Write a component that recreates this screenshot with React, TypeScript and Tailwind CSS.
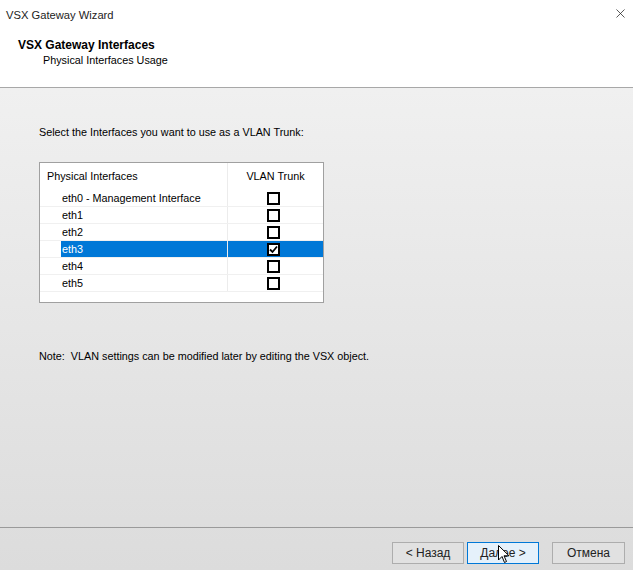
import { X } from 'lucide-react';

const rows = [
    { name: 'eth0 - Management Interface', checked: false },
    { name: 'eth1', checked: false },
    { name: 'eth2', checked: false },
    { name: 'eth3', checked: true, selected: true },
    { name: 'eth4', checked: false },
    { name: 'eth5', checked: false },
];

function Box({ checked }: { checked: boolean }) {
    return (
        <div className="w-[13px] h-[13px] border-2 border-black bg-white flex items-center justify-center">
            {checked && (
                <svg width="9" height="9" viewBox="0 0 9 9">
                    <path d="M1 4.5 L3.5 7 L8 1.5" fill="none" stroke="black" strokeWidth="1.8" />
                </svg>
            )}
        </div>
    );
}

export default function App() {
    return (
        <div className="w-[633px] h-[570px] flex flex-col text-[10.8px] text-black bg-white overflow-hidden" style={{ fontFamily: '"Liberation Sans", Arial, sans-serif' }}>
            {/* header */}
            <div className="h-[87px] bg-white relative">
                <div className="pl-[6px] pt-[7px] text-[11.2px] text-[#222]">VSX Gateway Wizard</div>
                <X className="absolute left-[613px] top-[6px] w-[15px] h-[15px] text-[#222]" strokeWidth={1.2} />
                <div className="pl-[18px] pt-[14px] font-bold text-[12px] leading-[14px]">VSX Gateway Interfaces</div>
                <div className="pl-[43px] pt-[1px] leading-[14px]">Physical Interfaces Usage</div>
            </div>
            <div className="h-[1px] bg-[#a8a8a8]" />

            {/* body */}
            <div className="flex-1 flex flex-col bg-gradient-to-b from-[#f0f0f0] to-[#dcdcdc]">
                <div className="flex-1 pl-[39px] pt-[37px]">
                    <div className="leading-[14px]">Select the Interfaces you want to use as a VLAN Trunk:</div>

                    <div className="mt-[23px] w-[285px] h-[141px] border border-[#a0a0a0] bg-white">
                        <div className="flex h-[27px] items-center">
                            <div className="w-[188px] pl-[7px] border-r border-[#ececec] h-full flex items-center">Physical Interfaces</div>
                            <div className="flex-1 text-center">VLAN Trunk</div>
                        </div>
                        {rows.map((r) => (
                            <div key={r.name} className="flex h-[17px] border-b border-[#f0f0f0]">
                                <div className="w-[21px]" />
                                <div className={`w-[167px] flex items-center pl-[1px] border-r border-[#ececec] ${r.selected ? 'bg-[#0078d7] text-white' : ''}`}>
                                    {r.name}
                                </div>
                                <div className={`flex-1 flex items-center justify-center pr-[4px] ${r.selected ? 'bg-[#0078d7]' : ''}`}>
                                    <Box checked={r.checked} />
                                </div>
                            </div>
                        ))}
                    </div>

                    <div className="mt-[46px] leading-[14px]">Note:&nbsp; VLAN settings can be modified later by editing the VSX object.</div>
                </div>

                <div className="h-[1px] bg-[#9a9a9a] mb-[14px]" />
                <div className="flex justify-end items-center pr-[8px] pb-[6px] text-[12px] relative">
                    <button className="w-[72px] h-[22px] bg-[#e1e1e1] border border-[#adadad] text-[#222]">&lt; Назад</button>
                    <button className="ml-[3px] w-[72px] h-[22px] bg-[#e5f1fb] border border-[#0078d7] text-[#222]">Далее &gt;</button>
                    <button className="ml-[13px] w-[73px] h-[22px] bg-[#e1e1e1] border border-[#adadad] text-[#222]">Отмена</button>
                    <svg className="absolute left-[498px] top-[3px]" width="12" height="19" viewBox="0 0 12 19">
                        <path d="M0.5 0.5 L0.5 15 L4 11.5 L6.5 17.5 L8.5 16.5 L6 10.8 L11 10.8 Z" fill="white" stroke="black" strokeWidth="1" />
                    </svg>
                </div>
            </div>
        </div>
    );
}
